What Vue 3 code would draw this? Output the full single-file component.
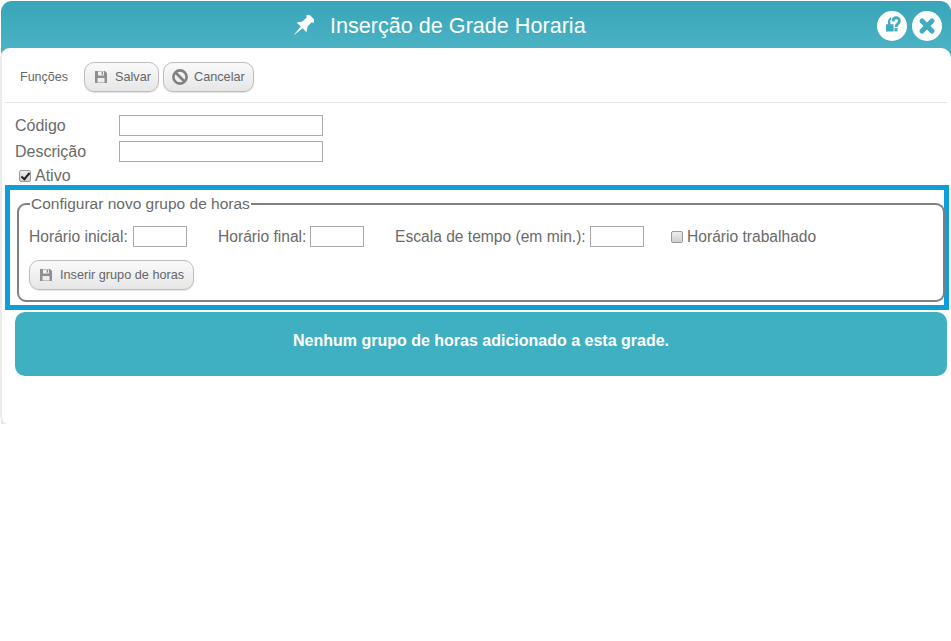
<script setup>
const fields = [
  { label: 'Código' },
  { label: 'Descrição' }
]
</script>

<template>
  <div class="page">
    <div class="dialog">
      <header class="head">
        <svg class="pin" viewBox="0 0 22 22" width="22" height="22">
          <g transform="rotate(45 11 11)" fill="#fff">
            <rect x="6" y="-1.5" width="10" height="3.5" rx="1"/>
            <rect x="7.5" y="1" width="7" height="8"/>
            <path d="M7.5 8 L4 13 H18 L14.5 8 Z"/>
            <path d="M9.6 12 H12.4 L11 24.5 Z"/>
          </g>
        </svg>
        <span class="title">Inserção de Grade Horaria</span>
        <div class="round-btns">
          <span class="round">
            <svg viewBox="0 0 30 30" width="30" height="30">
              <path fill="#3fadbf" d="M9 13.2 H11 L11 11 C11 8.5 12 7 14 6.2 L14.6 8 C13.6 8.6 13.4 9.6 13.4 11 L13.4 13.2 H16.6 V20.4 H9 Z"/>
              <path fill="none" stroke="#fff" stroke-width="5" d="M16 10.4 C16.2 5.6 22.4 5.6 22.4 10 C22.4 13 19 12.8 19 16"/>
              <path fill="none" stroke="#3fadbf" stroke-width="2.8" d="M16 10.4 C16.2 5.6 22.4 5.6 22.4 10 C22.4 13 19 12.8 19 16"/>
              <rect x="17.4" y="17.2" width="3.2" height="3.2" fill="#3fadbf"/>
            </svg>
          </span>
          <span class="round">
            <svg viewBox="0 0 20 20" width="20" height="20">
              <path fill="none" stroke="#3fadbf" stroke-width="5" stroke-linecap="round" d="M5 5 L15 15 M15 5 L5 15"/>
            </svg>
          </span>
        </div>
      </header>

      <div class="body">
        <div class="toolbar">
          <span class="tool-label">Funções</span>
          <button class="btn" type="button">
            <svg viewBox="0 0 14 14" width="14" height="14">
              <path fill="#8f8f8f" fill-rule="evenodd" d="M1 1 H11 L13 3 V13 H1 Z M4 1.5 V5.5 H10 V1.5 Z M3.5 8 V12.5 H10.5 V8 Z"/>
              <rect x="7.6" y="2" width="1.5" height="2.6" fill="#8f8f8f"/>
            </svg>
            <span>Salvar</span>
          </button>
          <button class="btn cancel" type="button">
            <svg viewBox="0 0 18 18" width="18" height="18">
              <circle cx="9" cy="9" r="6.6" fill="none" stroke="#808080" stroke-width="2.6"/>
              <path d="M4.5 4.5 L13.5 13.5" stroke="#808080" stroke-width="2.6"/>
            </svg>
            <span>Cancelar</span>
          </button>
        </div>

        <div class="form">
          <div v-for="f in fields" :key="f.label" class="field">
            <label class="field-label">{{ f.label }}</label>
            <input class="txt wide" type="text" />
          </div>
          <label class="active"><input class="chk" type="checkbox" checked /><span>Ativo</span></label>
        </div>

        <div class="highlight">
          <fieldset class="group">
            <legend>Configurar novo grupo de horas</legend>
            <div class="row">
              <label class="pair p1">Horário inicial:<input class="txt short first" type="text" /></label>
              <label class="pair p2">Horário final:<input class="txt short" type="text" /></label>
              <label class="pair p3">Escala de tempo (em min.):<input class="txt short" type="text" /></label>
              <label class="pair worked"><input class="chk" type="checkbox" /><span>Horário trabalhado</span></label>
            </div>
            <button class="btn insert" type="button">
              <svg viewBox="0 0 14 14" width="14" height="14">
                <path fill="#8f8f8f" fill-rule="evenodd" d="M1 1 H11 L13 3 V13 H1 Z M4 1.5 V5.5 H10 V1.5 Z M3.5 8 V12.5 H10.5 V8 Z"/>
                <rect x="7.6" y="2" width="1.5" height="2.6" fill="#8f8f8f"/>
              </svg>
              <span>Inserir grupo de horas</span>
            </button>
          </fieldset>
        </div>

        <div class="banner"><span>Nenhum grupo de horas adicionado a esta grade.</span></div>
      </div>
    </div>
  </div>
</template>

<style>
html, body { margin: 0; background: #fff; }
</style>

<style scoped>
.page {
  width: 951px;
  height: 641px;
  overflow: hidden;
  font-family: "Liberation Sans", Arial, sans-serif;
  color: #6a6a6a;
}
.dialog {
  height: 423px;
  margin: 1px 0 0 1px;
  display: flex;
  flex-direction: column;
  background:
    linear-gradient(#38a5b8, #4fb6c7) top / 100% 60px no-repeat,
    linear-gradient(#e4e4e4, #e4e4e4) left bottom / 12px 12px no-repeat;
  border-radius: 11px 11px 0 0;
}
.head {
  height: 47px;
  flex: none;
  display: flex;
  align-items: center;
  position: relative;
  box-sizing: border-box;
  padding-left: 291px;
  color: #fff;
}
.pin { margin-right: 16px; margin-top: 3px; }
.title { font-size: 21.6px; margin-top: 2px; }
.round-btns {
  position: absolute;
  right: 9px;
  top: 10px;
  display: flex;
  gap: 5px;
}
.round {
  width: 30px;
  height: 30px;
  border-radius: 50%;
  background: #fff;
  display: flex;
  align-items: center;
  justify-content: center;
}
.body {
  flex: 1;
  margin-left: -1px;
  background: #fff;
  border-radius: 10px 10px 0 8px;
  border-left: 2px solid #ececec;
  box-sizing: border-box;
  padding-left: 3px;
}
.toolbar {
  height: 55px;
  width: 942px;
  box-sizing: border-box;
  border-bottom: 1px solid #e4e4e4;
  display: flex;
  align-items: center;
  padding: 4px 0 0 15px;
}
.tool-label { font-size: 12.5px; width: 64px; color: #666; }
.btn {
  height: 30px;
  box-sizing: border-box;
  border: 1px solid #bdbdbd;
  border-radius: 10px;
  background: linear-gradient(#fafafa, #e6e6e6);
  box-shadow: 0 1px 1px rgba(0,0,0,.12);
  font: 12.7px "Liberation Sans", Arial, sans-serif;
  color: #666;
  display: inline-flex;
  align-items: center;
  padding: 0;
  width: 75px;
}
.btn svg { margin-left: 9px; margin-right: 7px; }
.cancel { width: 91px; margin-left: 4px; }
.cancel svg { margin-left: 7px; margin-right: 5px; }
.form { padding: 12px 0 0 10px; height: 70px; }
.field { display: flex; align-items: center; height: 21px; margin-bottom: 5px; }
.field-label { width: 104px; font-size: 16px; }
.txt {
  box-sizing: border-box;
  border: 1px solid #a9a9a9;
  background: #fff;
  height: 21px;
  padding: 0;
  margin: 0;
  outline: none;
}
.wide { width: 204px; }
.short { width: 54px; margin-left: 4px; }
.short.first { margin-left: 5px; }
.active { display: flex; align-items: center; font-size: 16px; margin: -1px 0 0 4px; height: 20px; }
.chk {
  appearance: none;
  width: 12px;
  height: 12px;
  margin: 0 4px 0 0;
  box-sizing: border-box;
  border: 1px solid #9a9a9a;
  border-radius: 2px;
  background: linear-gradient(#eee, #cfcfcf);
  position: relative;
  flex: none;
}
.chk:checked::before {
  content: "";
  position: absolute;
  left: 3px;
  top: 0;
  width: 3px;
  height: 7px;
  border: solid #222;
  border-width: 0 2px 2px 0;
  transform: rotate(40deg);
}
.highlight {
  width: 944px;
  height: 125px;
  box-sizing: border-box;
  border: 5px solid #0f9fd8;
  padding: 5px 0 0 7px;
  margin-bottom: 2px;
}
.group {
  margin: 0;
  width: 928px;
  height: 107px;
  box-sizing: border-box;
  border: 2px solid #808080;
  border-radius: 9px;
  padding: 0 0 0 10px;
  min-width: 0;
}
legend {
  font-size: 15.5px;
  padding: 0 1px;
  margin-left: 1px;
  line-height: 18px;
  color: #6a6a6a;
}
.row { display: flex; align-items: center; height: 21px; margin-top: 13px; font-size: 15.6px; }
.pair { display: flex; align-items: center; white-space: nowrap; }
.p1 { width: 189px; }
.p2 { width: 177px; }
.p3 { width: 276px; }
.insert { width: 165px; margin-top: 13px; display: flex; }
.banner {
  margin-left: 10px;
  width: 932px;
  height: 64px;
  box-sizing: border-box;
  padding-bottom: 7px;
  border-radius: 10px;
  background: #3fb0c2;
  color: #fff;
  font-weight: bold;
  font-size: 16px;
  display: flex;
  align-items: center;
  justify-content: center;
}
</style>
